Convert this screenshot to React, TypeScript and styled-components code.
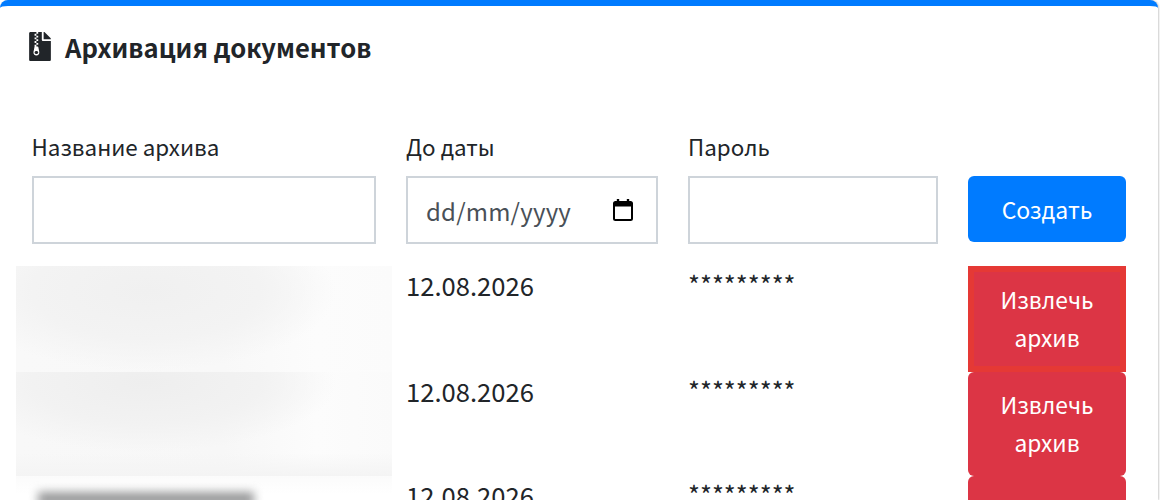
import React from 'react';
import styled, { createGlobalStyle } from 'styled-components';
import { FaFileArchive } from 'react-icons/fa';

const GlobalStyle = createGlobalStyle`
  html, body {
    margin: 0;
    height: 500px;
    overflow: hidden;
    background: #fff;
  }
  body {
    font-family: 'Noto Sans CJK SC', 'Noto Sans', sans-serif;
    color: #212529;
  }
`;

const Card = styled.section`
  width: 1158px;
  height: 494px;
  box-sizing: content-box;
  border-top: 6px solid #007bff;
  border-radius: 8px 8px 0 0;
  background: #fff;
  box-shadow: 1px 0 2px rgba(0, 0, 0, 0.2);
  overflow: hidden;
`;

const Title = styled.h2`
  display: flex;
  align-items: center;
  gap: 14px;
  height: 29px;
  margin: 0;
  padding: 26px 29px 0;
  font-size: 25.6px;
  font-weight: 700;
  line-height: 29px;
`;

const ArchiveIcon = styled(FaFileArchive)`
  flex: none;
  width: 22px;
  height: 29px;
`;

const Table = styled.div`
  display: grid;
  grid-template-columns: 376px 282px 280px 188px;
  margin: 69px 16px 0;
`;

const Label = styled.div<{ $first?: boolean }>`
  height: 38px;
  padding-left: ${(p) => (p.$first ? '15.5px' : '14px')};
  font-size: 22.4px;
  line-height: 32px;
`;

const InputCell = styled.div<{ $first?: boolean }>`
  padding: 8px 16px 22px ${(p) => (p.$first ? '16px' : '14px')};
`;

const Input = styled.div`
  display: flex;
  align-items: center;
  justify-content: space-between;
  height: 68px;
  box-sizing: border-box;
  border: 2px solid #ced4da;
  background: #fff;
  padding: 0 22px 0 18px;
  color: #495057;
  font-size: 24px;
  letter-spacing: 0.2px;
`;

const Create = styled.button`
  display: block;
  width: 158px;
  height: 66px;
  border: 0;
  border-radius: 6px;
  background: #007bff;
  color: #fff;
  font: inherit;
  font-size: 23px;
`;

const Thumb = styled.div<{ $row: number }>`
  height: ${(p) => (p.$row === 0 ? '106px' : p.$row === 1 ? '104px' : '60px')};
  position: relative;
  overflow: hidden;
  background: ${(p) =>
    p.$row === 2
      ? 'linear-gradient(#fbfbfb, #fff 30%)'
      : p.$row === 0
        ? 'radial-gradient(ellipse 190px 80px at 130px 25px, #f0f0f0 0%, #f3f3f3 60%, rgba(248,248,248,0) 100%), linear-gradient(90deg, #f9f9f9, #f8f8f8 55%, #fcfcfc 80%, #fbfbfb)'
        : 'radial-gradient(ellipse 190px 70px at 130px 10px, #eeeeee 0%, #f2f2f2 60%, rgba(247,247,247,0) 100%), linear-gradient(0deg, #f4f4f4, rgba(250,250,250,0) 22%), linear-gradient(90deg, #f8f8f8, #f7f7f7 55%, #fcfcfc 80%, #fafafa)'};
`;

// dark smudge of the blurred text in the third row
const Smudge = styled.div`
  position: absolute;
  left: 22px;
  top: 16px;
  width: 216px;
  height: 14px;
  background: #98999a;
  filter: blur(5px);
`;

const DateCell = styled.div`
  padding-left: 14px;
  font-size: 25.6px;
  line-height: 38px;
  white-space: nowrap;
`;

const Secret = styled.div`
  padding-left: 14px;
  font-size: 25.6px;
  line-height: 36px;
  white-space: nowrap;
`;

const ActionCell = styled.div`
  padding: 0 16px 0 14px;
`;

const Extract = styled.button<{ $focused?: boolean; $row: number }>`
  display: block;
  width: 158px;
  height: ${(p) => (p.$row === 0 ? '106px' : '104px')};
  box-sizing: border-box;
  padding: 0 20px;
  border: ${(p) => (p.$focused ? '6px solid #e53935' : '0')};
  border-radius: ${(p) => (p.$focused ? '0' : '6px')};
  background: #dc3545;
  color: #fff;
  font: inherit;
  font-size: 22.8px;
  line-height: 38px;
`;

const CalendarIcon = () => (
  <svg width="22" height="24" viewBox="0 0 22 24" fill="none">
    <rect x="2" y="4" width="18" height="18" rx="1.5" stroke="#000" strokeWidth="2" />
    <path d="M2 4h18v4.5H2z" fill="#000" />
    <path d="M6 1v3M16 1v3" stroke="#000" strokeWidth="2.4" />
  </svg>
);

const rows = [0, 1, 2];

function App() {
  return (
    <>
      <GlobalStyle />
      <Card>
        <Title>
          <ArchiveIcon />
          Архивация документов
        </Title>
        <Table>
          <Label $first>Название архива</Label>
          <Label>До даты</Label>
          <Label>Пароль</Label>
          <Label />

          <InputCell $first><Input /></InputCell>
          <InputCell>
            <Input>
              <span>dd/mm/yyyy</span>
              <CalendarIcon />
            </Input>
          </InputCell>
          <InputCell><Input /></InputCell>
          <InputCell><Create>Создать</Create></InputCell>

          {rows.map((row) => (
            <React.Fragment key={row}>
              <Thumb $row={row}>{row === 2 && <Smudge />}</Thumb>
              <DateCell>12.08.2026</DateCell>
              <Secret>*********</Secret>
              <ActionCell>
                {/* the last button runs out of the frame, its text lies below it */}
                <Extract $row={row} $focused={row === 0}>{row < 2 ? 'Извлечь архив' : ''}</Extract>
              </ActionCell>
            </React.Fragment>
          ))}
        </Table>
      </Card>
    </>
  );
}

export default App;
